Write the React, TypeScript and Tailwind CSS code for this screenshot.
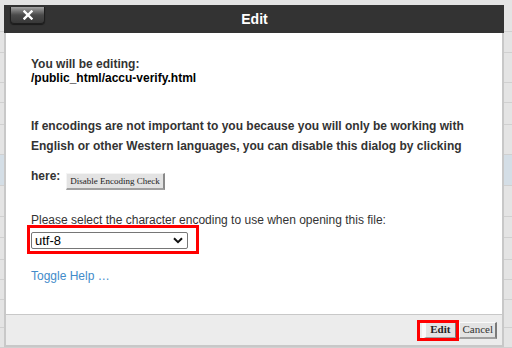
import { JSX } from "react";

// filas del fondo (tabla de archivos detrás del diálogo)
const rows: { h: number; blue?: boolean }[] = [
  { h: 32 },
  { h: 21 },
  { h: 30 },
  { h: 20 },
  { h: 22 },
  { h: 30 },
  { h: 31, blue: true },
  { h: 31 },
  { h: 21 },
  { h: 22 },
  { h: 20 },
  { h: 20 },
  { h: 28 },
  { h: 20 },
];

const CloseIcon = (): JSX.Element => (
  <svg width="10" height="10" viewBox="0 0 10 10">
    <path d="M1.5 1.5 L8.5 8.5 M8.5 1.5 L1.5 8.5" stroke="#fff" strokeWidth="2.4" strokeLinecap="square" />
  </svg>
);

const Chevron = (): JSX.Element => (
  <svg width="10" height="7" viewBox="0 0 10 7">
    <path d="M1 1.2 L5 5.2 L9 1.2" fill="none" stroke="#111" strokeWidth="2" />
  </svg>
);

export default function App(): JSX.Element {
  return (
    <div className="relative w-[512px] h-[348px] overflow-hidden bg-[#e4e4e4] font-['Liberation_Sans',Arial,sans-serif]">
      {/* Fondo */}
      <div className="flex flex-col">
        {rows.map((r, i) => (
          <div
            key={i}
            style={{ height: r.h }}
            className={`border-b border-[#d0d0d0] ${r.blue ? "bg-[#d4dee6]" : ""}`}
          />
        ))}
      </div>

      {/* Diálogo */}
      <div className="absolute left-[4px] top-[5px] w-[500px] h-[342px] flex flex-col">
        <div className="relative h-[28px] bg-[#333333] flex items-center justify-center">
          <span className="text-white font-bold text-[14px] pl-[1px]">Edit</span>
          <button
            type="button"
            className="absolute left-[6px] top-[2px] w-[35px] h-[17px] rounded-b-[4px] bg-gradient-to-b from-[#a5a5a5] via-[#4a4a4a] to-[#383838] border border-t-0 border-[#1e1e1e] shadow-[0_1px_1px_rgba(0,0,0,0.5)] flex items-center justify-center"
          >
            <CloseIcon />
          </button>
        </div>

        <div className="flex-1 bg-white border-x-2 border-[#c8c8c8] pl-[25px] pr-[23px] pt-[24px]">
          <div className="text-[12px] leading-[14px] font-bold text-[#333]">You will be editing:</div>
          <div className="text-[12px] leading-[14px] font-bold text-black">/public_html/accu-verify.html</div>

          <div className="mt-[31px] text-[12px] leading-[20px] font-bold text-[#333]">
            If encodings are not important to you because you will only be working with English or other Western
            languages, you can disable this dialog by clicking
          </div>
          <div className="mt-[13px] flex items-start gap-[6px] text-[12px] leading-[14px] font-bold text-[#333]">
            <span>here:</span>
            <button
              type="button"
              className="mt-[4px] h-[17px] px-[3px] bg-[#e3e3e3] border border-t-[#f4f4f4] border-l-[#f4f4f4] border-r-2 border-b-2 border-r-[#8a8a8a] border-b-[#a0a0a0] font-['Liberation_Serif',serif] font-normal text-[9px] leading-[13px] text-[#222]"
            >
              Disable Encoding Check
            </button>
          </div>

          <div className="mt-[23px] text-[12px] leading-[14px] text-[#333]">
            Please select the character encoding to use when opening this file:
          </div>
          <div className="ml-[-4px] mt-[-2px] w-[172px] h-[29px] border-[3px] border-[#ff0000] pt-[4px] pl-[1px]">
            <div className="w-[157px] h-[17px] border border-[#767676] rounded-[2px] bg-white flex items-center justify-between pl-[3px] pr-[4px] text-[13px] text-black">
              <span>utf-8</span>
              <Chevron />
            </div>
          </div>

          <div className="mt-[15px] text-[12px] leading-[14px] text-[#428bca]">Toggle Help …</div>
        </div>

        <div className="h-[33px] bg-[#ececec] border-t border-x-2 border-b-2 border-[#c8c8c8] flex items-center justify-end pr-[5px]">
          <div className="relative flex">
            <span className="absolute left-[-5px] right-[-2px] top-[-2px] bottom-[-2px] border-[3px] border-[#ff0000] pointer-events-none" />
            <button
              type="button"
              className="h-[17px] pl-[4px] pr-[5px] bg-[#e3e3e3] border border-t-[#fafafa] border-l-[#fafafa] border-l-[4px] border-r-2 border-b-2 border-r-[#7a7a7a] border-b-[#a0a0a0] font-['Liberation_Serif',serif] font-bold text-[11px] leading-[13px] text-[#222]"
            >
              Edit
            </button>
          </div>
          <button
            type="button"
            className="ml-[2px] h-[17px] px-[2px] bg-[#e3e3e3] border border-t-[#fafafa] border-l-[#fafafa] border-r-2 border-b-2 border-r-[#7a7a7a] border-b-[#a0a0a0] font-['Liberation_Serif',serif] text-[11px] leading-[13px] text-[#333]"
          >
            Cancel
          </button>
        </div>
      </div>
    </div>
  );
}
